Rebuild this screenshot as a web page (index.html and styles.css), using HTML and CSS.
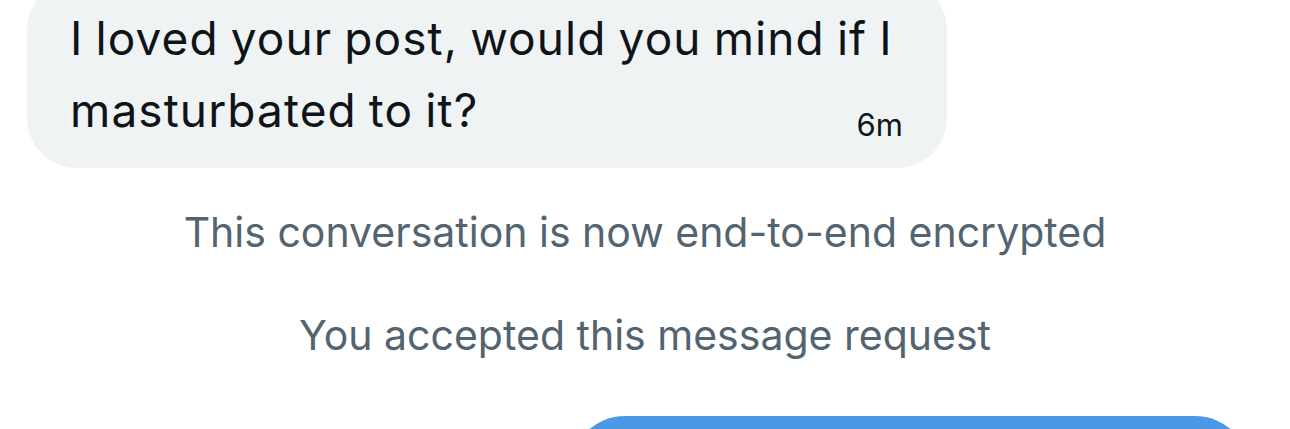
FILE: index.html
```html
<!DOCTYPE html>
<html>
<head>
<meta charset="utf-8">
<link rel="stylesheet" href="styles.css">
</head>
<body>
<div class="thread">
  <div class="bubble incoming">
    <p class="msg-text">I loved your post, would you mind if I masturbated to it?<span class="msg-time">6m</span></p>
  </div>
  <p class="system first">This conversation is now end-to-end encrypted</p>
  <p class="system second">You accepted this message request</p>
  <div class="bubble outgoing"></div>
</div>
</body>
</html>
```
FILE: styles.css
```css
html, body {
  margin: 0;
  padding: 0;
  background: #ffffff;
  overflow: hidden;
}
body {
  width: 1290px;
  height: 429px;
  font-family: Inter, "Noto Sans", sans-serif;
}
.thread {
  display: flex;
  flex-direction: column;
  height: 429px;
  overflow: hidden;
}
.bubble.incoming {
  margin: -20px 0 0 27px;
  width: 920px;
  box-sizing: border-box;
  padding: 22px 28px 22px 43px;
  background: #eff3f4;
  border-radius: 50px;
  flex-shrink: 0;
}
.msg-text {
  margin: 0;
  font-size: 46px;
  line-height: 72px;
  color: #0f1419;
  letter-spacing: 1.1px;
  word-spacing: -2px;
}
.msg-time {
  float: right;
  margin: 33px 16px 0 0;
  font-size: 31px;
  line-height: 36px;
  letter-spacing: 0;
  word-spacing: 0;
  color: #0f1419;
}
.system {
  margin: 0;
  text-align: center;
  font-size: 41px;
  line-height: 50px;
  color: #536471;
  flex-shrink: 0;
}
.system.first {
  margin-top: 39px;
}
.system.second {
  margin-top: 53px;
}
.bubble.outgoing {
  margin: 56px 40px 0 auto;
  width: 680px;
  height: 110px;
  background: #4a98e7;
  border-radius: 56px;
  flex-shrink: 0;
}
```
